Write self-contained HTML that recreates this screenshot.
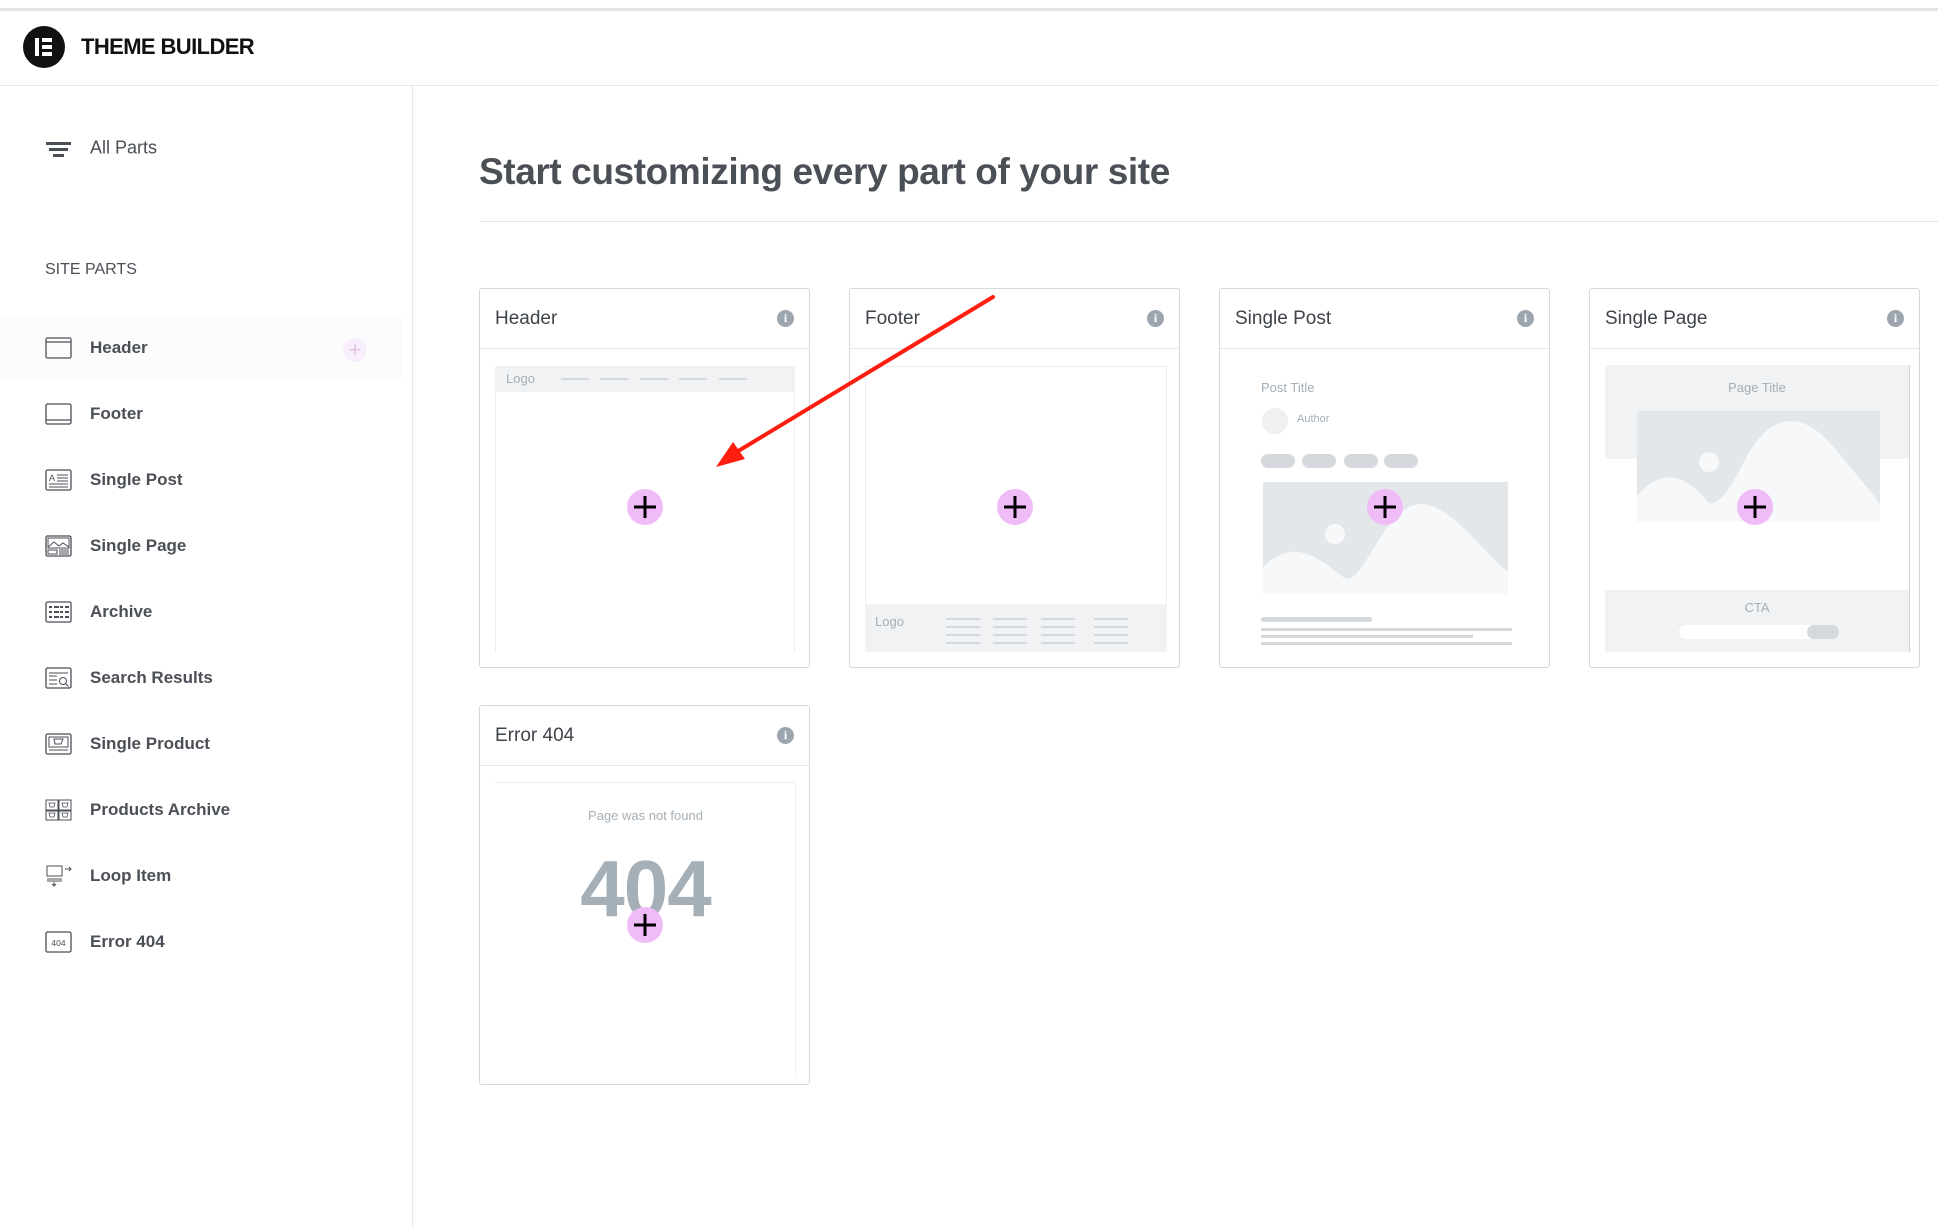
<!DOCTYPE html>
<html><head><meta charset="utf-8"><style>
*{margin:0;padding:0;box-sizing:border-box}
body{width:1938px;height:1228px;background:#fff;font-family:"Liberation Sans",Arial,sans-serif;position:relative;overflow:hidden;color:#4b4f56}
.a{position:absolute}
.topline{left:0;top:8px;width:1938px;height:3px;background:#e2e3e5}
.hb{left:0;top:85px;width:1938px;height:1px;background:#e6e7e9}
.sb{left:412px;top:86px;width:1px;height:1142px;background:#e6e7e9}
.logo{left:23px;top:26px;width:42px;height:42px;border-radius:50%;background:#111}
.ttl{left:81px;top:34px;font-size:22px;font-weight:bold;color:#111;letter-spacing:-0.6px}
.nav{left:90px;font-size:17px;font-weight:bold;color:#4b4f56;transform:translateY(-50%)}
.ic{left:45px;width:27px;height:22px;transform:translateY(-50%)}
.card{width:331px;border:1px solid #d5d8dc;border-radius:3px;background:#fff}
.ch{position:absolute;left:0;top:0;right:0;height:60px;border-bottom:1px solid #e6e7e9}
.ch span{position:absolute;left:15px;top:19px;font-size:19px;color:#3f444b}
.info{position:absolute;right:15px;top:21px;width:17px;height:17px;border-radius:50%;background:#9da5ae;color:#fff;font:bold 12px "Liberation Serif",serif;text-align:center;line-height:17px}
.plus{width:36px;height:36px;border-radius:50%;background:#f0bcf8;transform:translate(-50%,-50%)}
.plus:before,.plus:after{content:"";position:absolute;background:#000;left:50%;top:50%;transform:translate(-50%,-50%)}
.plus:before{width:22px;height:3px}.plus:after{width:3px;height:22px}
.g{background:#f1f2f4}
.ln{background:#d5d8dc;height:2px}
.lt{color:#a4afb7;font-size:13px}
</style></head><body>
<div class="a topline"></div>
<div class="a logo"><div class="a" style="left:12px;top:12px;width:4px;height:18px;background:#fff"></div><div class="a" style="left:19px;top:12px;width:10px;height:4px;background:#fff"></div><div class="a" style="left:19px;top:19px;width:10px;height:4px;background:#fff"></div><div class="a" style="left:19px;top:26px;width:10px;height:4px;background:#fff"></div></div>
<div class="a ttl">THEME BUILDER</div>
<div class="a hb"></div>
<div class="a sb"></div>

<div class="a" style="left:46px;top:142px;width:25px;height:3px;background:#4b4f56"></div>
<div class="a" style="left:49px;top:148px;width:19px;height:3px;background:#4b4f56"></div>
<div class="a" style="left:53px;top:154px;width:11px;height:3px;background:#4b4f56"></div>
<div class="a nav" style="top:148px;font-weight:normal;font-size:18px">All Parts</div>
<div class="a" style="left:45px;top:261px;font-size:16px;color:#4b4f56">SITE PARTS</div>

<div class="a" style="left:0;top:316px;width:402px;height:66px;background:#fcfcfc"></div>
<div class="a" style="left:343px;top:338px;width:24px;height:24px;border-radius:50%;background:#f9eefb;color:#e2c3e8;font-size:22px;text-align:center;line-height:23px">+</div>

<svg class="a ic" style="top:348px" viewBox="0 0 27 22"><rect x="1" y="1" width="25" height="20" rx="1.5" fill="none" stroke="#4b4f56" stroke-width="1.3"/><line x1="1" y1="5" x2="26" y2="5" stroke="#4b4f56" stroke-width="1.3"/></svg>
<div class="a nav" style="top:348px">Header</div>
<svg class="a ic" style="top:414px" viewBox="0 0 27 22"><rect x="1" y="1" width="25" height="20" rx="1.5" fill="none" stroke="#4b4f56" stroke-width="1.3"/><line x1="1" y1="17" x2="26" y2="17" stroke="#4b4f56" stroke-width="1.3"/></svg>
<div class="a nav" style="top:414px">Footer</div>
<svg class="a ic" style="top:480px" viewBox="0 0 27 22"><rect x="1" y="1" width="25" height="20" rx="1.5" fill="none" stroke="#4b4f56" stroke-width="1.3"/><text x="4" y="12" font-size="9" fill="#4b4f56" font-family="Liberation Sans">A</text><path d="M12 6h11M12 9h11M12 12h11M4 15h19M4 18h19" stroke="#4b4f56"/></svg>
<div class="a nav" style="top:480px">Single Post</div>
<svg class="a ic" style="top:546px" viewBox="0 0 27 22"><rect x="1" y="1" width="25" height="20" rx="1.5" fill="none" stroke="#4b4f56" stroke-width="1.3"/><rect x="3" y="3" width="21" height="10" fill="none" stroke="#4b4f56"/><path d="M3 12l6-5 5 4 4-3 6 4" fill="none" stroke="#4b4f56"/><path d="M3 15h9v4H3zM14 15h10M14 17h10M14 19h10" fill="none" stroke="#4b4f56"/></svg>
<div class="a nav" style="top:546px">Single Page</div>
<svg class="a ic" style="top:612px" viewBox="0 0 27 22"><rect x="1" y="1" width="25" height="20" rx="1.5" fill="none" stroke="#4b4f56" stroke-width="1.3"/><path d="M4 6h3M9 6h5M15 6h3M20 6h4M4 11h3M9 11h5M15 11h3M20 11h4M4 16h3M9 16h5M15 16h3M20 16h4" stroke="#4b4f56" stroke-width="2"/></svg>
<div class="a nav" style="top:612px">Archive</div>
<svg class="a ic" style="top:678px" viewBox="0 0 27 22"><rect x="1" y="1" width="25" height="20" rx="1.5" fill="none" stroke="#4b4f56" stroke-width="1.3"/><path d="M4 6h19M4 9h8M4 13h8M4 17h8" stroke="#4b4f56"/><circle cx="18" cy="14" r="3.5" fill="none" stroke="#4b4f56"/><path d="M20.5 16.5l3 3" stroke="#4b4f56"/></svg>
<div class="a nav" style="top:678px">Search Results</div>
<svg class="a ic" style="top:744px" viewBox="0 0 27 22"><rect x="1" y="1" width="25" height="20" rx="1.5" fill="none" stroke="#4b4f56" stroke-width="1.3"/><rect x="4" y="4" width="19" height="10" fill="none" stroke="#4b4f56"/><path d="M9 6h9l-2 5h-6zM4 17h19" fill="none" stroke="#4b4f56"/></svg>
<div class="a nav" style="top:744px">Single Product</div>
<svg class="a ic" style="top:810px" viewBox="0 0 27 22"><path d="M1 1h12v10H1zM14 1h12v10H14zM1 12h12v9H1zM14 12h12v9H14z" fill="none" stroke="#4b4f56"/><path d="M4 4h6l-1 4H5zM17 4h6l-1 4h-4zM4 14h6l-1 4H5zM17 14h6l-1 4h-4z" fill="none" stroke="#4b4f56" stroke-width=".8"/></svg>
<div class="a nav" style="top:810px">Products Archive</div>
<svg class="a ic" style="top:876px" viewBox="0 0 27 22"><rect x="2" y="1" width="15" height="10" fill="none" stroke="#4b4f56"/><path d="M2 14h15M2 16h15M9 17v4M7 19l2 2 2-2M20 4h6M24 2l2 2-2 2" fill="none" stroke="#4b4f56"/></svg>
<div class="a nav" style="top:876px">Loop Item</div>
<svg class="a ic" style="top:942px" viewBox="0 0 27 22"><rect x="1" y="1" width="25" height="20" rx="1.5" fill="none" stroke="#4b4f56" stroke-width="1.3"/><text x="13.5" y="15" font-size="8.5" fill="#4b4f56" text-anchor="middle" font-family="Liberation Sans">404</text></svg>
<div class="a nav" style="top:942px">Error 404</div>

<div class="a" style="left:479px;top:151px;font-size:37px;font-weight:bold;color:#4b4f56;letter-spacing:-0.4px">Start customizing every part of your site</div>
<div class="a" style="left:480px;top:221px;width:1458px;height:1px;background:#e3e5e8"></div>

<!-- Header card -->
<div class="a card" style="left:479px;top:288px;height:380px">
  <div class="ch"><span>Header</span><div class="info">i</div></div>
  <div class="a" style="left:15px;top:77px;width:300px;height:286px;border-left:1px solid #eceef0;border-right:1px solid #eceef0"></div>
  <div class="a g" style="left:15px;top:77px;width:300px;height:26px"></div>
  <div class="a lt" style="left:26px;top:82px">Logo</div>
  <div class="a ln" style="left:81px;top:89px;width:28px"></div><div class="a ln" style="left:120px;top:89px;width:28px"></div><div class="a ln" style="left:160px;top:89px;width:28px"></div><div class="a ln" style="left:199px;top:89px;width:28px"></div><div class="a ln" style="left:239px;top:89px;width:28px"></div>
</div>
<div class="a plus" style="left:645px;top:507px"></div>

<!-- Footer card -->
<div class="a card" style="left:849px;top:288px;height:380px">
  <div class="ch"><span>Footer</span><div class="info">i</div></div>
  <div class="a" style="left:15px;top:77px;width:302px;height:286px;border:1px solid #eceef0"></div>
  <div class="a g" style="left:15px;top:315px;width:302px;height:48px"></div>
  <div class="a lt" style="left:25px;top:325px">Logo</div>
  <div class="a" style="left:96px;top:329px;width:200px;height:30px;background:repeating-linear-gradient(#d5d8dc 0 2px,transparent 2px 8px);-webkit-mask:linear-gradient(90deg,#000 0 34px,transparent 34px 47px,#000 47px 81px,transparent 81px 95px,#000 95px 129px,transparent 129px 148px,#000 148px 182px,transparent 182px)"></div>
</div>
<div class="a plus" style="left:1015px;top:507px"></div>

<!-- Single Post -->
<div class="a card" style="left:1219px;top:288px;height:380px">
  <div class="ch"><span>Single Post</span><div class="info">i</div></div>
  <div class="a lt" style="left:41px;top:91px">Post Title</div>
  <div class="a" style="left:42px;top:119px;width:26px;height:26px;border-radius:50%;background:#eef0f2"></div>
  <div class="a" style="top:124px;font-size:11px;color:#a4afb7;left:77px">Author</div>
  <div class="a" style="left:41px;top:165px;width:34px;height:14px;border-radius:7px;background:#d5d8dc"></div>
  <div class="a" style="left:82px;top:165px;width:34px;height:14px;border-radius:7px;background:#d5d8dc"></div>
  <div class="a" style="left:124px;top:165px;width:34px;height:14px;border-radius:7px;background:#d5d8dc"></div>
  <div class="a" style="left:164px;top:165px;width:34px;height:14px;border-radius:7px;background:#d5d8dc"></div>
  <svg class="a" style="left:43px;top:193px" width="245" height="112" viewBox="0 0 245 112"><rect width="245" height="112" fill="#e4e7ea"/><circle cx="72" cy="52" r="10" fill="#f7f8f9"/><path d="M0 85C30 55 55 75 80 95C100 110 120 20 160 22C190 25 220 70 245 90V112H0Z" fill="#f7f8f9"/></svg>
  <div class="a ln" style="left:41px;top:328px;width:111px;height:5px;border-radius:3px"></div>
  <div class="a ln" style="left:41px;top:339px;width:251px;height:3px"></div>
  <div class="a ln" style="left:41px;top:346px;width:212px;height:3px"></div>
  <div class="a ln" style="left:41px;top:353px;width:251px;height:3px"></div>
</div>
<div class="a plus" style="left:1385px;top:507px"></div>

<!-- Single Page -->
<div class="a card" style="left:1589px;top:288px;height:380px">
  <div class="ch"><span>Single Page</span><div class="info">i</div></div>
  <div class="a" style="left:15px;top:76px;width:305px;height:287px;border-right:1px solid #cfd2d6"></div>
  <div class="a g" style="left:15px;top:76px;width:304px;height:94px"></div>
  <div class="a lt" style="left:15px;top:91px;width:304px;text-align:center">Page Title</div>
  <svg class="a" style="left:47px;top:122px" width="243" height="111" viewBox="0 0 243 111"><rect width="243" height="111" fill="#e4e7ea"/><circle cx="72" cy="51" r="10" fill="#f7f8f9"/><path d="M0 85C25 55 50 65 70 90C80 100 95 75 110 45C130 10 160 -10 200 40C220 65 243 90 243 95V111H0Z" fill="#f7f8f9"/></svg>
  <div class="a g" style="left:15px;top:301px;width:304px;height:62px"></div>
  <div class="a lt" style="left:15px;top:311px;width:304px;text-align:center">CTA</div>
  <div class="a" style="left:89px;top:336px;width:160px;height:14px;border-radius:7px;background:#fff"></div>
  <div class="a" style="left:217px;top:336px;width:32px;height:14px;border-radius:7px;background:#d5d8dc"></div>
</div>
<div class="a plus" style="left:1755px;top:507px"></div>

<!-- Error 404 -->
<div class="a card" style="left:479px;top:705px;height:380px">
  <div class="ch"><span>Error 404</span><div class="info">i</div></div>
  <div class="a" style="left:15px;top:76px;width:301px;height:292px;border-top:1px solid #eceef0;border-right:1px solid #eceef0"></div>
  <div class="a lt" style="left:0;top:102px;width:331px;text-align:center">Page was not found</div>
  <div class="a" style="left:0;top:138px;width:331px;text-align:center;font-size:80px;font-weight:bold;color:#a4afb7;line-height:90px;letter-spacing:-1px">404</div>
</div>
<div class="a plus" style="left:645px;top:925px"></div>

<!-- red arrow -->
<svg class="a" style="left:0;top:0" width="1938" height="1228" viewBox="0 0 1938 1228">
<path d="M993 297L730 456" stroke="#ff1e10" stroke-width="4" stroke-linecap="round"/>
<path d="M716 467L733 442L745 459Z" fill="#ff1e10"/>
</svg>
</body></html>
